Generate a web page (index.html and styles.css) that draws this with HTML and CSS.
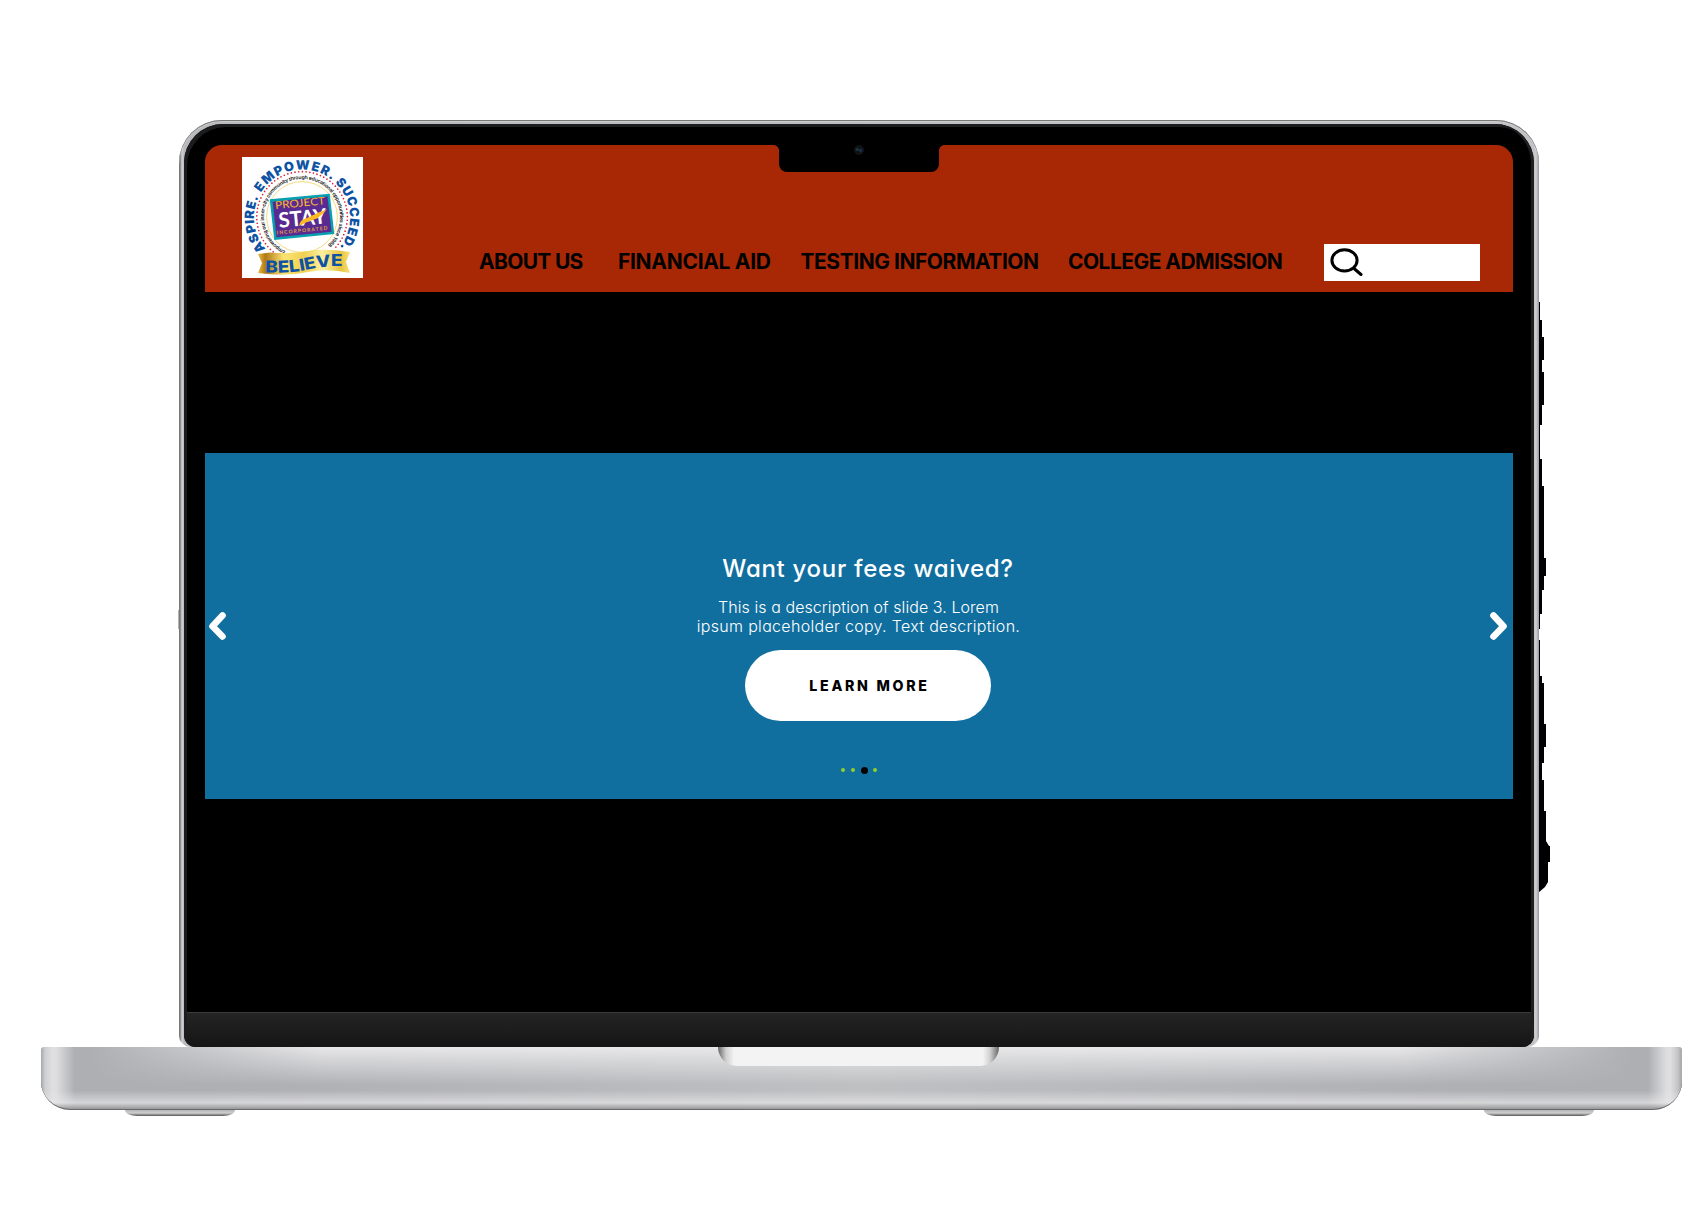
FILE: index.html
```html
<!DOCTYPE html>
<html lang="en">
<head>
<meta charset="utf-8">
<title>Project STAY</title>
<link rel="stylesheet" href="styles.css">
</head>
<body>
<main class="stage">
  <div class="laptop">
    <svg class="edge" width="24" height="600" viewBox="1534 297 24 600" aria-hidden="true">
      <path d="M1534 302H1540V320H1542V337H1544V360H1542V372H1544V405H1542V425H1540V459H1542V486H1544V558H1546V576H1544V590H1542V614H1540V629H1538.500V640H1540V676H1542V683H1544V724H1546V747H1544V763H1542V780H1544V811H1546V841L1549 846H1550V862H1548V882L1545 887L1538 893H1534Z"/>
    </svg>
    <div class="lid">
      <div class="bezel">
        <div class="camera-notch"><span class="camera"></span></div>
        <div class="screen">
          <header class="header">
            <svg class="logo" viewBox="0 0 121 121" role="img" aria-label="Project STAY Incorporated">
              <defs>
                <path id="ring-outer" d="M60 108.500A48 48 0 1 1 60.010 108.500"/>
                <path id="ring-inner" d="M60 98A38 38 0 1 1 60.010 98"/>
                <path id="ribbon-line" d="M23 115.500Q48 116.500 66 112.500T102 109.500"/>
                <linearGradient id="gold">
                  <stop offset="0" stop-color="#e9bd3c"/><stop offset=".08" stop-color="#b07a17"/>
                  <stop offset=".28" stop-color="#fbe372"/><stop offset=".5" stop-color="#f0d052"/>
                  <stop offset=".7" stop-color="#fcf0a0"/><stop offset=".9" stop-color="#e8c340"/><stop offset="1" stop-color="#f8e477"/>
                </linearGradient>
              </defs>
              <rect width="121" height="121" fill="#fff"/>
              <circle cx="60" cy="60" r="35.400" fill="none" stroke="#f5da83"/>
              <path d="M34 97A45.300 45.300 0 1 1 93.500 90.500" fill="none" stroke="#dd2438" stroke-width="1.700" stroke-linecap="round" stroke-dasharray="0 3.700"/>
              <g class="logo-arc">
                <text><textPath href="#ring-outer" startOffset="41" textLength="55">ASPIRE.</textPath></text>
                <text><textPath href="#ring-outer" startOffset="101.500" textLength="81">EMPOWER.</textPath></text>
                <text><textPath href="#ring-outer" startOffset="186.500" textLength="71">SUCCEED.</textPath></text>
              </g>
              <text class="logo-motto"><textPath href="#ring-inner" startOffset="17" textLength="193">Empowering our inner-city community through educational opportunities since 1968</textPath></text>
              <path d="M27.700 42.300L87.700 36.700L92.300 77L32.300 83Z" fill="#08a0ae"/>
              <path d="M30.600 44.700L85.500 39.500L89.500 74.700L34.500 80.200Z" fill="#592b91"/>
              <g transform="translate(33.500 52) rotate(-5.300)">
                <text class="logo-project" textLength="50" lengthAdjust="spacingAndGlyphs">PROJECT</text>
                <text class="logo-stay" x="2" y="19" textLength="48" lengthAdjust="spacingAndGlyphs">STAY</text>
                <path d="M22 19Q23 13 30 12Q40 8 51 5Q46 10 41 13Q31 15 22 19Z" fill="#fdb924"/>
                <text class="logo-inc" x="-1" y="25.500" textLength="51">INCORPORATED</text>
              </g>
              <path d="M16 97L28 95.500Q50 97 66 94Q84 91 108 95L104 105L108 116Q86 111 66 115Q44 120 16 116L20 106Z" fill="url(#gold)"/>
              <text class="logo-believe"><textPath href="#ribbon-line" textLength="78" lengthAdjust="spacingAndGlyphs">BELIEVE</textPath></text>
            </svg>
            <nav class="nav">
              <a class="nav-link about">ABOUT US</a>
              <a class="nav-link aid">FINANCIAL AID</a>
              <a class="nav-link testing">TESTING INFORMATION</a>
              <a class="nav-link college">COLLEGE ADMISSION</a>
            </nav>
            <div class="search">
              <svg width="34" height="30" viewBox="0 0 34 30" fill="none" stroke="#000" stroke-width="3" stroke-linecap="round" aria-hidden="true">
                <ellipse cx="15.500" cy="13.300" rx="12.600" ry="10.600"/>
                <path d="M25 21.500L32 27.500"/>
              </svg>
            </div>
          </header>
          <section class="hero">
            <svg class="chevron" width="20" height="30" viewBox="0 0 20 30" aria-hidden="true"><path d="M15.500 4.500L5.500 15.200L15.500 25.500"/></svg>
            <div class="slide">
              <h1 class="slide-title">Want your fees waived?</h1>
              <p class="slide-text"><span class="line-one">This is a description of slide 3. Lorem</span><br><span class="line-two">ipsum placeholder copy. Text description.</span></p>
              <a class="button">LEARN MORE</a>
              <div class="dots"><i></i><i></i><i class="active"></i><i></i></div>
            </div>
            <svg class="chevron" width="20" height="30" viewBox="0 0 20 30" aria-hidden="true"><path d="M4.500 4.500L14.500 15.200L4.500 25.500"/></svg>
          </section>
        </div>
        <div class="chin"></div>
      </div>
    </div>
    <div class="base"><div class="lip"></div></div>
    <div class="feet"><span></span><span></span></div>
  </div>
</main>
</body>
</html>
```
FILE: styles.css
```css
* { box-sizing: border-box; }

body {
  margin: 0;
  background: #fff;
  font-family: Inter, "Open Sans", sans-serif;
  font-feature-settings: "cv11";
}

.stage {
  width: 1708px;
  height: 1226px;
  padding: 120px 26px 0 41px;
  overflow: hidden;
}

.laptop { position: relative; width: 1641px; }

.edge { position: absolute; left: 1493px; top: 177px; }

.lid {
  position: relative;
  width: 1360px;
  height: 927px;
  margin-left: 138px;
  padding: 4px 5px 0;
  border-radius: 43px 43px 12px 12px;
  background: linear-gradient(90deg, #77787a, #77787a 1px, #d3d4d6 3px, #b9b9bd 5px, #c3c3c7 1355px, #d0d0d4 1357px, #96979a);
  box-shadow: inset 0 1px #777, inset 0 2px #ccc;
}
.lid::before {
  content: "";
  position: absolute;
  left: -1px;
  top: 490px;
  width: 1px;
  height: 19px;
  background: #b5b5b7;
}

.bezel {
  position: relative;
  display: flex;
  flex-direction: column;
  height: 923px;
  padding: 21px 0 0;
  border-radius: 39px 39px 12px 12px;
  background: #000;
  box-shadow: inset 3px 3px #1b1c1e, inset -3px 0 #1f1f20;
  overflow: hidden;
}

.screen {
  width: 1308px;
  height: 867px;
  margin-left: 21px;
  background: #000;
  border-radius: 17px 17px 0 0;
  overflow: hidden;
}

.camera-notch {
  position: absolute;
  z-index: 1;
  left: 595px;
  top: 20px;
  width: 160px;
  height: 28px;
  border-radius: 0 0 8px 8px;
  background: #000;
}
.camera-notch::before,
.camera-notch::after {
  content: "";
  position: absolute;
  top: 1px;
  width: 5px;
  height: 5px;
}
.camera-notch::before { left: -5px; background: radial-gradient(circle at 0 100%, transparent 4.500px, #000 5px); }
.camera-notch::after { right: -5px; background: radial-gradient(circle at 100% 100%, transparent 4.500px, #000 5px); }

.camera {
  position: absolute;
  left: 75px;
  top: 1px;
  width: 10px;
  height: 10px;
  border-radius: 50%;
  background: radial-gradient(circle at 66% 55%, #1b3a78, transparent 28%), radial-gradient(circle at 32% 45%, #1c4a4a, transparent 24%), #101214;
}

.header {
  display: flex;
  align-items: flex-start;
  height: 147px;
  padding-left: 37px;
  background: #a82805;
}

.logo { width: 121px; height: 121px; margin-top: 12px; flex: none; }
.logo-arc { font: 900 12.800px Inter, sans-serif; fill: #0d52a3; }
.logo-motto { font: 600 5.100px Inter, sans-serif; fill: #111; }
.logo-project { font: 400 10.500px Lato, sans-serif; fill: #f9b82e; }
.logo-stay { font: 700 21px Lato, sans-serif; fill: #fff; }
.logo-inc { font: 700 5px Lato, sans-serif; fill: #e5a23c; }
.logo-believe { font: 800 16.500px Inter, sans-serif; fill: #0d52a3; }

.nav { display: flex; margin: 102px 0 0 116px; line-height: 30px; }
.nav-link { font-size: 21px; font-weight: 700; color: #000; white-space: nowrap; }
.about { width: 104.500px; letter-spacing: -.7px; }
.aid { width: 153.500px; margin-left: 34.500px; letter-spacing: -.3px; }
.testing { width: 239px; margin-left: 29px; letter-spacing: -.460px; }
.college { margin-left: 28.500px; letter-spacing: -.550px; }

.search {
  flex: none;
  width: 156px;
  height: 37px;
  margin: 99px 33px 0 auto;
  padding: 3px 0 0 5px;
  background: #fff;
}
.search svg { display: block; }

.hero {
  display: flex;
  justify-content: space-between;
  height: 346px;
  margin-top: 161px;
  padding: 0 4px 0 2px;
  background: #116f9f;
}
.chevron { margin-top: 158px; fill: none; stroke: #fff; stroke-width: 6.600; stroke-linecap: round; stroke-linejoin: round; }

.slide { display: flex; flex-direction: column; align-items: center; width: 340px; padding-top: 98px; color: #fff; }
.slide-title { margin: 0 0 0 20px; font-size: 24px; line-height: 36px; font-weight: 500; letter-spacing: .7px; white-space: nowrap; }
.slide-text { margin: 11px 0 0 1px; font-size: 16px; line-height: 19px; font-weight: 300; text-align: center; white-space: nowrap; }
.line-one { letter-spacing: .070px; }
.line-two { letter-spacing: .310px; }
.button {
  flex: none;
  display: flex;
  align-items: center;
  justify-content: center;
  width: 246px;
  height: 71px;
  margin: 14px 0 0 19px;
  padding: 0 0 1px 4px;
  border-radius: 35.500px;
  background: #fff;
  color: #000;
  font-size: 14.200px;
  font-weight: 800;
  letter-spacing: 2.700px;
}
.dots { display: flex; align-items: center; gap: 5.600px; margin: 45px 0 0 2.500px; height: 8px; }
.dots i { width: 4px; height: 4px; border-radius: 50%; background: #93cf2b; }
.dots .active { width: 7px; height: 7px; background: #000; }

.chin {
  height: 35px;
  margin: 0 3px;
  border-top: 1px solid #3b3b3b;
  background: linear-gradient(#242424, #151515);
}

.base {
  position: relative;
  width: 1641px;
  height: 63px;
  border-radius: 4px 4px 29px 29px;
  border-bottom: 1px solid #68696b;
  background:
    linear-gradient(90deg, #a9aaad, transparent 4px, transparent 1637px, #a9aaad),
    linear-gradient(transparent 70%, rgba(230,230,232,.7) 90%, rgba(150,150,152,.9)),
    linear-gradient(90deg, #c5c6c8, #e0e0e2 12px, #dcdcde 16px, transparent 34px, transparent 1607px, #dcdcde 1625px, #e0e0e2 1629px, #b5b6b8),
    linear-gradient(90deg, #aeafb3 3%, transparent 17%, transparent 83%, #aeafb3 97%),
    linear-gradient(rgba(240,240,241,.85), transparent 60%),
    linear-gradient(90deg, #aeafb3, #b0b1b5 15%, #bfc0c2 50%, #b0b1b5 85%, #aeafb3);
}

.lip {
  width: 281px;
  height: 19px;
  margin: 0 auto 0 677px;
  border-radius: 0 0 20px 20px;
  background: linear-gradient(90deg, #666, #d0d0d0 8px, #f3f3f3 16px, #f3f3f3 265px, #d0d0d0 272px, #666);
}

.feet { display: flex; justify-content: space-between; padding: 0 88px 0 84px; }
.feet span {
  width: 110px;
  height: 6px;
  border-radius: 0 0 12px 12px / 0 0 6px 6px;
  background: linear-gradient(#b4b5b7, #cdcecf 50%, #555);
}
```
